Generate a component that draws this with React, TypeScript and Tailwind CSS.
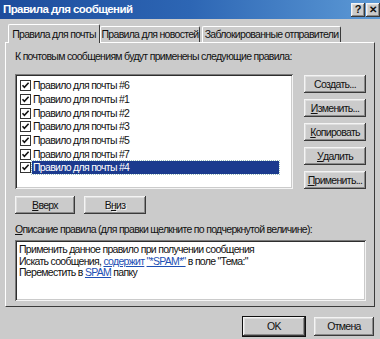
import React from "react";

const raised =
  "bg-[#cbcbcb] shadow-[inset_-1px_-1px_#3a3a3a,inset_1px_1px_#f4f4f4,inset_-2px_-2px_#8a8a8a,inset_2px_2px_#dedede]";
const sunken =
  "bg-white shadow-[inset_1px_1px_#7a7a7a,inset_-1px_-1px_#f4f4f4,inset_2px_2px_#2e2e2e,inset_-2px_-2px_#cbcbcb]";

const rules = ["#6", "#1", "#2", "#3", "#5", "#7", "#4"];

const CheckBox = () => (
  <svg width="11" height="11" viewBox="0 0 11 11" className="shrink-0">
    <rect x="0.5" y="0.5" width="10" height="10" fill="#fff" stroke="#333" />
    <path d="M2.5 5.2 L4.4 7.3 L8.6 2.8" fill="none" stroke="#111" strokeWidth="1.6" />
  </svg>
);

const Btn = ({
  children,
  className = "",
}: {
  children: React.ReactNode;
  className?: string;
}) => (
  <div
    className={`flex h-[18px] items-center justify-center whitespace-nowrap text-[#111] ${raised} ${className}`}
  >
    {children}
  </div>
);

const U = ({ children }: { children: React.ReactNode }) => (
  <span className="underline underline-offset-1">{children}</span>
);

const tab =
  "flex items-center whitespace-nowrap rounded-t-[2px] border-l border-t border-r border-l-white border-t-white border-r-[#3a3a3a]";

export default function App() {
  return (
    <div
      className="h-[339px] w-[380px] overflow-hidden bg-[#cbcbcb] text-[10.5px] leading-[13px] tracking-[-0.7px] text-[#111]"
      style={{ fontFamily: '"Liberation Sans", Arial, sans-serif' }}
    >
      {/* title bar */}
      <div className="flex h-[19px] items-center justify-between bg-gradient-to-r from-[#1d4c9c] via-[#2d66b4] to-[#5d9ad6] pl-[3px]">
        <span className="text-[11.5px] font-bold tracking-[-0.6px] text-white">Правила для сообщений</span>
        <div className="flex gap-[1px] tracking-normal">
          <div className={`flex h-[14px] w-[14px] items-center justify-center text-[11px] font-bold ${raised}`}>?</div>
          <div className={`flex h-[14px] w-[14px] items-center justify-center text-[10px] font-bold ${raised}`}>✕</div>
        </div>
      </div>

      <div className="px-[5px] pt-[5px]">
        {/* tabs */}
        <div className="relative z-10 flex h-[18px] items-end pl-[3px]">
          <div className={`-mb-[1px] h-[19px] w-[92px] justify-center bg-[#cbcbcb] ${tab}`}>
            Правила для почты
          </div>
          <div className={`h-[16px] w-[100px] justify-center ${tab}`}>Правила для новостей</div>
          <div className={`ml-[2px] h-[16px] w-[139px] justify-center ${tab}`}>
            Заблокированные отправители
          </div>
        </div>

        {/* panel */}
        <div className="h-[265px] w-[370px] border border-l-white border-t-white border-r-[#3a3a3a] border-b-[#3a3a3a] pl-[9px] pt-[7px]">
          <div className="h-[24px]">К почтовым сообщениям будут применены следующие правила:</div>

          <div className="flex gap-[11px]">
            <div className={`h-[115px] w-[278px] pl-[5px] pt-[5px] ${sunken}`}>
              {rules.map((r, i) => (
                <div key={r} className="flex h-[13.7px] items-center gap-[1px]">
                  <CheckBox />
                  <span
                    className={
                      i === rules.length - 1
                        ? "w-[247px] bg-[#1b3a8e] pl-[1px] text-white outline outline-1 outline-dotted outline-[#9bb]"
                        : "pl-[1px]"
                    }
                  >
                    Правило для почты {r}
                  </span>
                </div>
              ))}
            </div>

            <div className="flex w-[62px] flex-col gap-[6px] pt-[1px]">
              <Btn>Соз<U>д</U>ать...</Btn>
              <Btn><U>И</U>зменить...</Btn>
              <Btn><U>К</U>опировать</Btn>
              <Btn><U>У</U>далить</Btn>
              <Btn><U>П</U>рименить...</Btn>
            </div>
          </div>

          <div className="mt-[7px] flex gap-[9px]">
            <Btn className="w-[60px]"><U>В</U>верх</Btn>
            <Btn className="w-[62px] text-[#9a9a9a] [text-shadow:1px_1px_#f4f4f4]">В<U>н</U>из</Btn>
          </div>

          <div className="mt-[9px] h-[17px]">
            <U>О</U>писание правила (для правки щелкните по подчеркнутой величине):
          </div>

          <div className={`h-[61px] w-[351px] px-[4px] pt-[4px] leading-[11.5px] ${sunken}`}>
            <div>Применить данное правило при получении сообщения</div>
            <div>
              Искать сообщения,{" "}
              <span className="text-[#1d4fb4] underline">содержит</span>{" "}
              <span className="text-[#1d4fb4] underline">"*SPAM*"</span> в поле "Тема:"
            </div>
            <div>
              Переместить в <span className="text-[#1d4fb4] underline">SPAM</span> папку
            </div>
          </div>
        </div>

        {/* footer */}
        <div className="mt-[10px] flex justify-end gap-[9px] pr-[1px]">
          <Btn className="h-[19px] w-[62px] outline outline-1 outline-[#111]">OK</Btn>
          <Btn className="h-[19px] w-[60px]">Отмена</Btn>
        </div>
      </div>
    </div>
  );
}
